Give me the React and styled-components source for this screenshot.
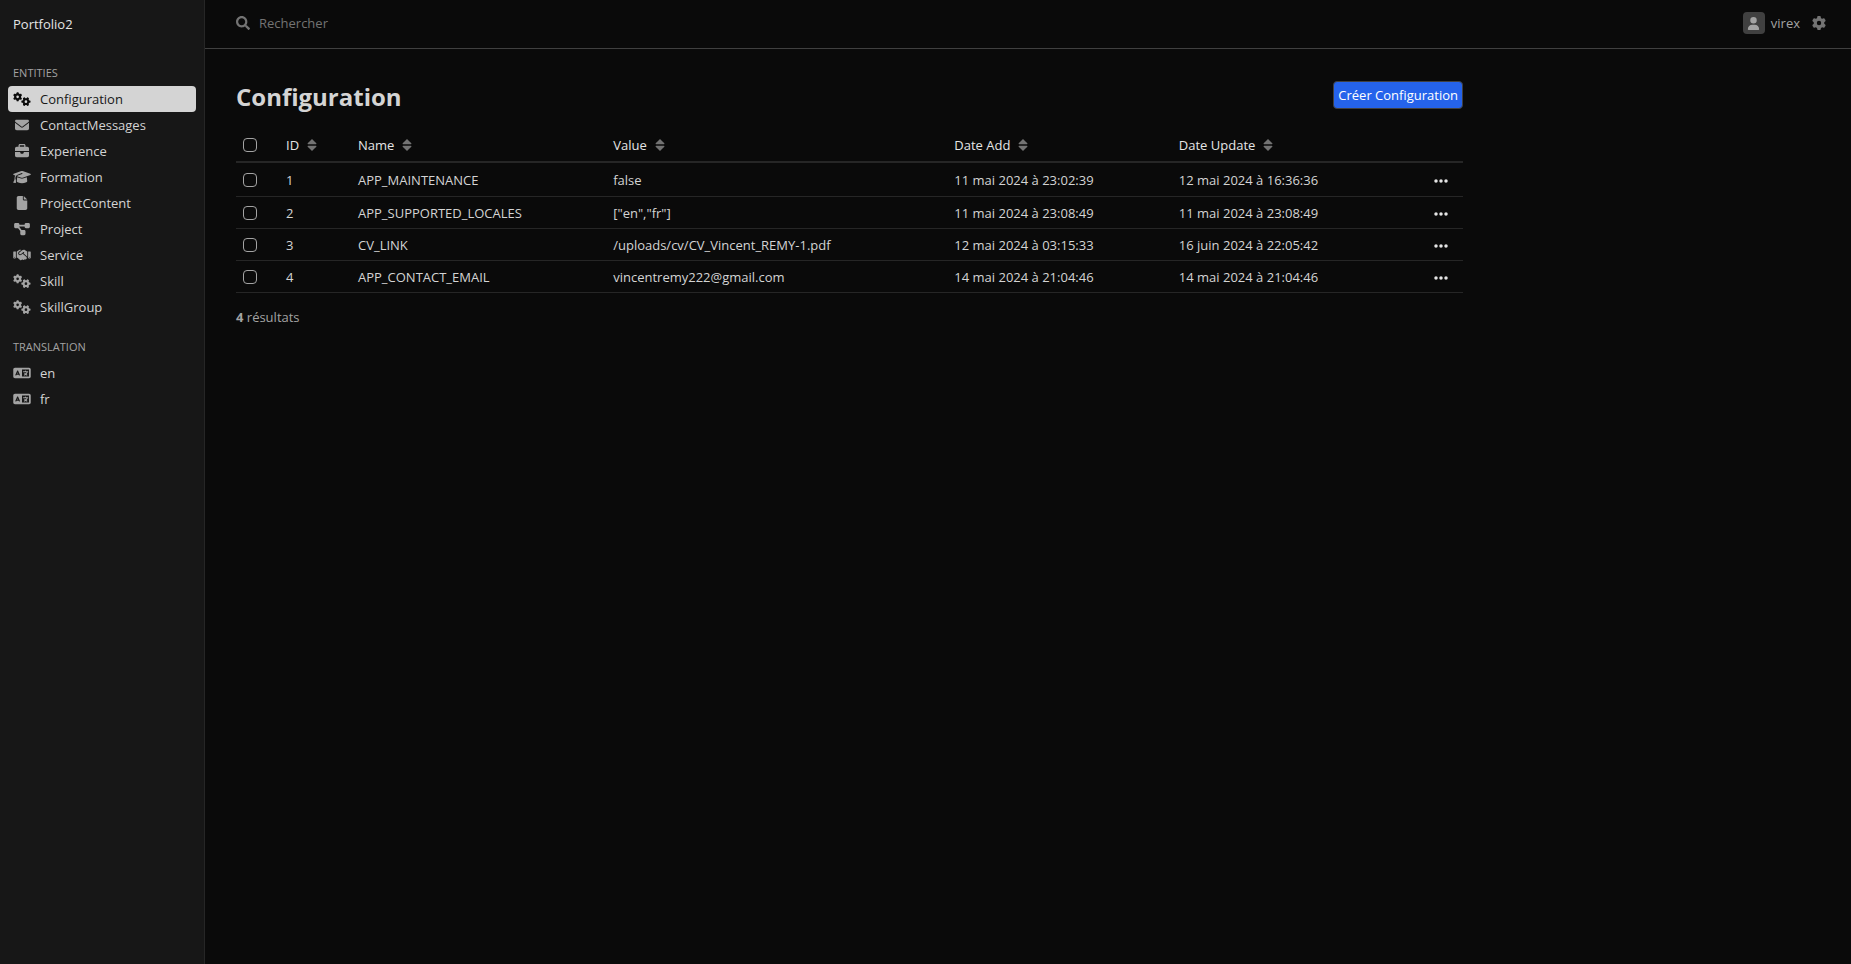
import React from "react";
import styled, { createGlobalStyle, ThemeProvider } from "styled-components";
import { FaSearch } from "react-icons/fa";
import {
  FaBriefcase,
  FaEllipsis,
  FaEnvelope,
  FaFile,
  FaGear,
  FaGears,
  FaGraduationCap,
  FaDiagramProject,
  FaHandshake,
  FaLanguage,
  FaUser,
} from "react-icons/fa6";

const theme = {
  colors: {
    body: "#0a0a0a",
    sidebar: "#171717",
    sidebarBorder: "#262626",
    headerBorder: "#404040",
    line: "#262626",
    text: "#d4d4d4",
    heading: "#e5e5e5",
    muted: "#a3a3a3",
    faint: "#737373",
    primary: "#2563eb",
  },
};

const GlobalStyle = createGlobalStyle`
  *, *::before, *::after {
    box-sizing: border-box;
  }

  body {
    margin: 0;
    background: ${theme.colors.body};
    color: ${theme.colors.text};
    font-family: "Open Sans", "Noto Sans", sans-serif;
    font-size: 13px;
    line-height: 18px;
  }

  button, input {
    font: inherit;
    color: inherit;
  }

  a {
    color: inherit;
    text-decoration: none;
  }
`;

//--- LAYOUT ---//

const Layout = styled.div`
  display: flex;
  min-height: 100vh;
`;

const Sidebar = styled.aside`
  flex: none;
  width: 205px;
  padding: 0 8px;
  background: ${({ theme }) => theme.colors.sidebar};
  border-right: 1px solid ${({ theme }) => theme.colors.sidebarBorder};
`;

const Page = styled.div`
  flex: 1;
  min-width: 0;
`;

//--- SIDEBAR ---//

const Brand = styled.a`
  display: flex;
  align-items: center;
  height: 48px;
  padding: 0 5px;
  color: ${({ theme }) => theme.colors.heading};
`;

const MenuSection = styled.section`
  & + & {
    margin-top: 2px;
  }
`;

const MenuTitle = styled.h2`
  margin: 0;
  padding: 16px 5px 4px;
  font-size: 11px;
  line-height: 18px;
  font-weight: 400;
  text-transform: uppercase;
  color: ${({ theme }) => theme.colors.muted};
`;

const Menu = styled.ul`
  list-style: none;
  margin: 0;
  padding: 0;
`;

const MenuLink = styled.a`
  display: flex;
  align-items: center;
  gap: 9px;
  height: 26px;
  padding: 0 5px;
  border-radius: 4px;
  background: ${({ $active, theme }) =>
    $active ? theme.colors.text : "transparent"};
  color: ${({ $active, theme }) => ($active ? "#171717" : theme.colors.text)};

  svg {
    width: 18px;
    height: 14px;
    color: ${({ $active, theme }) => ($active ? "#0a0a0a" : theme.colors.muted)};
  }
`;

//--- HEADER ---//

const Header = styled.header`
  display: flex;
  align-items: center;
  justify-content: space-between;
  height: 49px;
  padding: 0 25px 2px 31px;
  border-bottom: 1px solid ${({ theme }) => theme.colors.headerBorder};
`;

const SearchBox = styled.label`
  display: flex;
  align-items: center;
  gap: 9px;
  flex: 1;
  color: ${({ theme }) => theme.colors.faint};
`;

const SearchInput = styled.input`
  flex: 1;
  padding: 0;
  border: none;
  outline: none;
  background: transparent;

  &::placeholder {
    color: ${({ theme }) => theme.colors.faint};
    opacity: 1;
  }
`;

const UserArea = styled.div`
  display: flex;
  align-items: center;
  gap: 12px;
`;

const IconButton = styled.button`
  display: inline-flex;
  align-items: center;
  vertical-align: middle;
  padding: 0;
  border: none;
  background: transparent;
  color: ${({ $color }) => $color};
  cursor: pointer;
`;

const UserButton = styled(IconButton)`
  gap: 6px;
`;

const Avatar = styled.span`
  display: flex;
  align-items: center;
  justify-content: center;
  width: 22px;
  height: 22px;
  border-radius: 4px;
  background: ${({ theme }) => theme.colors.headerBorder};
`;

//--- CONTENT ---//

const Content = styled.main`
  max-width: 1289px;
  padding: 32px 31px;
`;

const ContentHeader = styled.div`
  display: flex;
  align-items: flex-start;
  justify-content: space-between;
  height: 48px;
`;

const Title = styled.h1`
  margin: 0;
  font-size: 24px;
  line-height: 32px;
  font-weight: 700;
`;

const PrimaryButton = styled.button`
  height: 28px;
  padding: 0 4px;
  border: 1px solid ${({ theme }) => theme.colors.headerBorder};
  border-radius: 4px;
  background: ${({ theme }) => theme.colors.primary};
  color: #fff;
  cursor: pointer;
`;

const Table = styled.table`
  width: 100%;
  table-layout: fixed;
  border-collapse: separate;
  border-spacing: 0;

  th,
  td {
    height: 32px;
    padding: 0 7px;
    text-align: left;
    font-weight: 400;
    white-space: nowrap;
    border-bottom: 1px solid ${({ theme }) => theme.colors.line};
  }

  th {
    height: 34px;
    padding-bottom: 1px;
    color: ${({ theme }) => theme.colors.heading};
    border-bottom-width: 2px;
  }

  tbody tr:first-child td {
    height: 34px;
  }

  td:last-child {
    text-align: right;
    padding-right: 14px;
  }
`;

const Column = styled.col`
  width: ${({ $width }) => $width};
`;

const SortButton = styled(IconButton)`
  gap: 8px;
`;

const Checkbox = styled.input`
  appearance: none;
  display: block;
  width: 14px;
  height: 14px;
  margin: 0;
  border: 1px solid ${({ theme }) => theme.colors.muted};
  border-radius: 4px;

  &:checked {
    background: ${({ theme }) => theme.colors.primary};
  }
`;

const Results = styled.p`
  margin: 15px 0 0;
  color: ${({ theme }) => theme.colors.muted};
`;

//--- DATA ---//

const entities = [
  { label: "Configuration", icon: FaGears, active: true },
  { label: "ContactMessages", icon: FaEnvelope },
  { label: "Experience", icon: FaBriefcase },
  { label: "Formation", icon: FaGraduationCap },
  { label: "ProjectContent", icon: FaFile },
  { label: "Project", icon: FaDiagramProject },
  { label: "Service", icon: FaHandshake },
  { label: "Skill", icon: FaGears },
  { label: "SkillGroup", icon: FaGears },
];

const translations = [
  { label: "en", icon: FaLanguage },
  { label: "fr", icon: FaLanguage },
];

const columns = ["ID", "Name", "Value", "Date Add", "Date Update"];
const columnWidths = ["43px", "72px", "20.8%", "27.8%", "18.3%", "18%", "auto"];

const rows = [
  [1, "APP_MAINTENANCE", "false", "11 mai 2024 à 23:02:39", "12 mai 2024 à 16:36:36"],
  [2, "APP_SUPPORTED_LOCALES", '["en","fr"]', "11 mai 2024 à 23:08:49", "11 mai 2024 à 23:08:49"],
  [3, "CV_LINK", "/uploads/cv/CV_Vincent_REMY-1.pdf", "12 mai 2024 à 03:15:33", "16 juin 2024 à 22:05:42"],
  [4, "APP_CONTACT_EMAIL", "vincentremy222@gmail.com", "14 mai 2024 à 21:04:46", "14 mai 2024 à 21:04:46"],
];

//--- COMPONENTS ---//

const SortIcon = () => (
  <svg width="10" height="12" viewBox="0 0 10 12" fill="#737373">
    <path d="M5 0 9.3 4.3Q9.8 5.3 8.8 5.3H1.2Q.2 5.3.7 4.3Z" />
    <path d="M5 12 9.3 7.7Q9.8 6.7 8.8 6.7H1.2Q.2 6.7.7 7.7Z" />
  </svg>
);

const MenuList = ({ items }) => (
  <Menu>
    {items.map(({ label, icon: Icon, active }) => (
      <li key={label}>
        <MenuLink href="#" $active={active}>
          <Icon /> {label}
        </MenuLink>
      </li>
    ))}
  </Menu>
);

const App = () => {
  return (
    <ThemeProvider theme={theme}>
      <GlobalStyle />
      <Layout>
        <Sidebar>
          <Brand href="#">Portfolio2</Brand>
          <MenuSection>
            <MenuTitle>Entities</MenuTitle>
            <MenuList items={entities} />
          </MenuSection>
          <MenuSection>
            <MenuTitle>Translation</MenuTitle>
            <MenuList items={translations} />
          </MenuSection>
        </Sidebar>
        <Page>
          <Header>
            <SearchBox>
              <FaSearch size={14} />
              <SearchInput type="search" placeholder="Rechercher" aria-label="Rechercher" />
            </SearchBox>
            <UserArea>
              <UserButton $color="#a3a3a3">
                <Avatar>
                  <FaUser size={13} />
                </Avatar>
                virex
              </UserButton>
              <IconButton $color="#737373" aria-label="Settings">
                <FaGear size={14} />
              </IconButton>
            </UserArea>
          </Header>
          <Content>
            <ContentHeader>
              <Title>Configuration</Title>
              <PrimaryButton>Créer Configuration</PrimaryButton>
            </ContentHeader>
            <Table>
              <colgroup>
                {columnWidths.map((width, i) => (
                  <Column key={i} $width={width} />
                ))}
              </colgroup>
              <thead>
                <tr>
                  <th>
                    <Checkbox type="checkbox" aria-label="Select all" />
                  </th>
                  {columns.map((column) => (
                    <th key={column}>
                      <SortButton $color="#e5e5e5">
                        {column} <SortIcon />
                      </SortButton>
                    </th>
                  ))}
                  <th />
                </tr>
              </thead>
              <tbody>
                {rows.map((row) => (
                  <tr key={row[0]}>
                    <td>
                      <Checkbox type="checkbox" aria-label={`Select ${row[1]}`} />
                    </td>
                    {row.map((value, i) => (
                      <td key={i}>{value}</td>
                    ))}
                    <td>
                      <IconButton $color="#e5e5e5" aria-label="Actions">
                        <FaEllipsis size={16} />
                      </IconButton>
                    </td>
                  </tr>
                ))}
              </tbody>
            </Table>
            <Results>
              <strong>{rows.length}</strong> résultats
            </Results>
          </Content>
        </Page>
      </Layout>
    </ThemeProvider>
  );
};

export default App;
